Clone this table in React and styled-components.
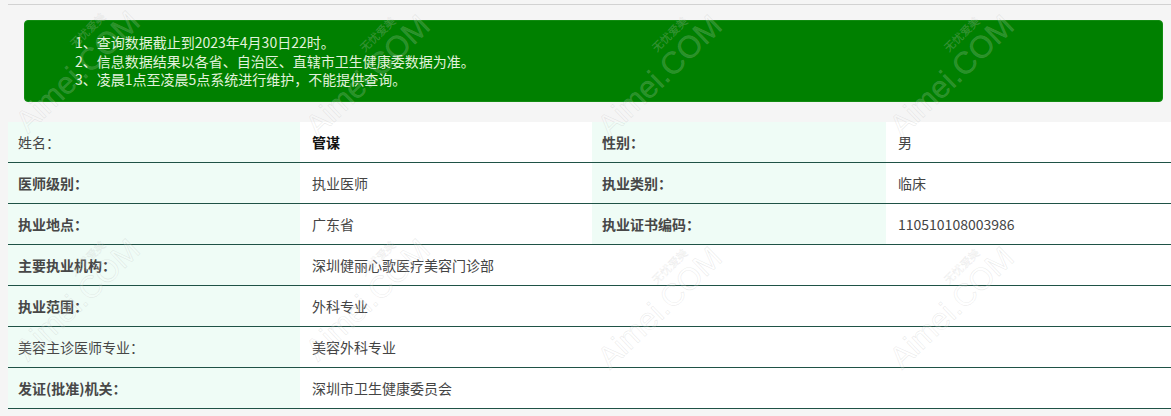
import React from 'react'
import styled, { createGlobalStyle } from 'styled-components'

const GlobalStyle = createGlobalStyle`
  html, body {
    margin:0;
    padding:0;
    background:#f5f5f5;
    overflow:hidden;
  }
  body{
    font-family:"Noto Sans CJK SC", "Noto Sans", sans-serif;
  }
`;

const Page = styled.div`
  position:relative;
  min-height:416px;
  padding:4px 0 0 8px;
  box-sizing:border-box;
  overflow:hidden;
`;

const Divider = styled.div`
  border-top:1px solid #d2d2d2;
`;

const Notice = styled.div`
  margin:15px 8px 0 16px;
  padding:12px 0 12px 50px;
  background:#008000;
  border:1px solid #118c11;
  border-radius:4px;
  color:#e2f2dc;
  font-size:14px;
  line-height:18.5px;
`;

const NoticeLine = styled.div`
  white-space:nowrap;
`;

const InfoTable = styled.div`
  margin-top:20px;
  width:1168px;
  font-size:14px;
`;

const Row = styled.div`
  display:grid;
  grid-template-columns:292px 292px 294px 290px;
  border-bottom:1px solid #1f5246;
`;

const Label = styled.div`
  height:40px;
  display:flex;
  align-items:center;
  padding-left:10px;
  background:#effcf6;
  color:#474747;
  font-weight:${p => (p.$light ? 400 : 700)};
`;

const Value = styled.div`
  height:40px;
  display:flex;
  align-items:center;
  padding-left:12px;
  background:#fff;
  color:${p => (p.$strong ? '#111' : '#444')};
  font-weight:${p => (p.$strong ? 700 : 400)};
  grid-column:${p => (p.$wide ? 'span 3' : 'auto')};
`;

const WatermarkLayer = styled.div`
  position:absolute;
  inset:0;
  pointer-events:none;
`;

const Mark = styled.div`
  position:absolute;
  width:180px;
  height:34px;
  margin-left:-90px;
  margin-top:-17px;
  transform:rotate(-44deg);
  font-family:"Liberation Sans", Arial, sans-serif;
  font-size:31px;
  line-height:34px;
  text-align:center;
  color:rgba(255,255,255,0.18);
  -webkit-text-stroke:0.6px rgba(150,150,150,0.2);
  white-space:nowrap;
`;

const MarkSmall = styled.span`
  position:absolute;
  left:104px;
  top:-13px;
  font-family:"Noto Sans CJK SC", sans-serif;
  font-size:11px;
  line-height:12px;
  -webkit-text-stroke:0.4px rgba(150,150,150,0.2);
`;

const notes = [
  '1、查询数据截止到2023年4月30日22时。',
  '2、信息数据结果以各省、自治区、直辖市卫生健康委数据为准。',
  '3、凌晨1点至凌晨5点系统进行维护，不能提供查询。',
];

const wideRows = [
  { label: '主要执业机构：', value: '深圳健丽心歌医疗美容门诊部' },
  { label: '执业范围：', value: '外科专业' },
  { label: '美容主诊医师专业：', value: '美容外科专业', light: true },
  { label: '发证(批准)机关：', value: '深圳市卫生健康委员会' },
];

const marks = [
  [78, 72], [368, 76], [660, 76], [952, 76],
  [78, 300], [368, 300], [660, 308], [952, 308],
];

const App = () => {
  return (
    <>
      <GlobalStyle />
      <Page>
        <Divider />
        <Notice>
          {notes.map((n, i) => (
            <NoticeLine key={i}>{n}</NoticeLine>
          ))}
        </Notice>
        <InfoTable>
          <Row>
            <Label $light>姓名：</Label>
            <Value $strong>管谋</Value>
            <Label>性别：</Label>
            <Value>男</Value>
          </Row>
          <Row>
            <Label>医师级别：</Label>
            <Value>执业医师</Value>
            <Label>执业类别：</Label>
            <Value>临床</Value>
          </Row>
          <Row>
            <Label>执业地点：</Label>
            <Value>广东省</Value>
            <Label>执业证书编码：</Label>
            <Value>110510108003986</Value>
          </Row>
          {wideRows.map((r, i) => (
            <Row key={i}>
              <Label $light={r.light}>{r.label}</Label>
              <Value $wide>{r.value}</Value>
            </Row>
          ))}
        </InfoTable>
        <WatermarkLayer>
          {marks.map(([x, y], i) => (
            <Mark key={i} style={{ left: x, top: y }}>
              <MarkSmall>无忧爱美</MarkSmall>
              Aimei.COM
            </Mark>
          ))}
        </WatermarkLayer>
      </Page>
    </>
  )
}

export default App
